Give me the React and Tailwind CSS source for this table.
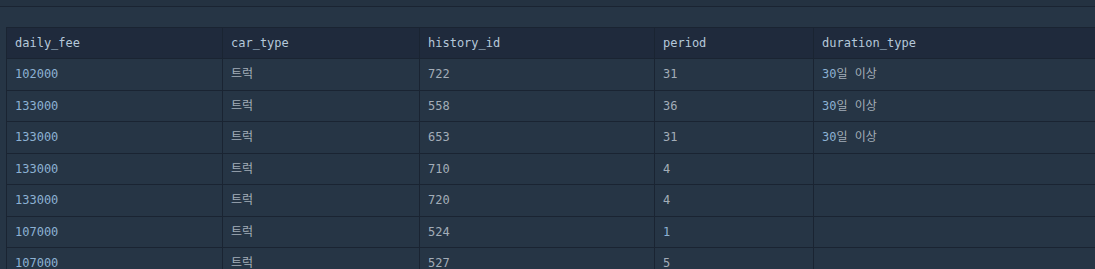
import React from 'react';

const columns = [
    { key: 'daily_fee', width: 'w-[216px]' },
    { key: 'car_type', width: 'w-[197px]' },
    { key: 'history_id', width: 'w-[235px]' },
    { key: 'period', width: 'w-[159px]' },
    { key: 'duration_type', width: 'flex-1' },
];

const rows = [
    ['102000', '트럭', '722', '31', '30일 이상'],
    ['133000', '트럭', '558', '36', '30일 이상'],
    ['133000', '트럭', '653', '31', '30일 이상'],
    ['133000', '트럭', '710', '4', ''],
    ['133000', '트럭', '720', '4', ''],
    ['107000', '트럭', '524', '1', ''],
    ['107000', '트럭', '527', '5', ''],
];

const font = { fontFamily: '"DejaVu Sans Mono", "Noto Sans CJK KR", monospace' };

// numbers that the viewer tints blue
const isBlue = (ci, val) => ci === 0 || (ci === 3 && val === '1');

const Cell = ({ ci, val }) => {
    if (ci === 4 && val) {
        const [num, rest] = [val.slice(0, 2), val.slice(2)];
        return (
            <span>
                <span className="text-[#8cb1d3]">{num}</span>
                <span className="text-[#a3adb8]">{rest}</span>
            </span>
        );
    }
    return <span className={isBlue(ci, val) ? 'text-[#8cb1d3]' : 'text-[#a3adb8]'}>{val}</span>;
};

export default function App() {
    return (
        <div className="w-[1095px] h-[269px] overflow-hidden bg-[#263545] text-[12px]" style={font}>
            <div className="h-[6px] bg-[#243241]" />
            <div className="h-px bg-[#1a2432]" />
            <div className="pt-[20px] pl-[6px]">
                <div className="w-[1120px] border-t border-l border-[#1a2432]">
                    <div className="flex h-[31px] bg-[#1f2a3c] border-b border-[#1a2432]">
                        {columns.map((c, i) => (
                            <div
                                key={c.key}
                                className={`${c.width} shrink-0 flex items-center px-[8px] text-[#b5c8da] ${i < 4 ? 'border-r border-[#1a2432]' : ''}`}
                            >
                                {c.key}
                            </div>
                        ))}
                    </div>
                    {rows.map((r, ri) => (
                        <div key={ri} className="flex h-[31.5px] border-b border-[#1a2432]">
                            {r.map((val, ci) => (
                                <div
                                    key={ci}
                                    className={`${columns[ci].width} shrink-0 flex items-center px-[8px] ${ci < 4 ? 'border-r border-[#1a2432]' : ''}`}
                                >
                                    <Cell ci={ci} val={val} />
                                </div>
                            ))}
                        </div>
                    ))}
                </div>
            </div>
        </div>
    );
}
